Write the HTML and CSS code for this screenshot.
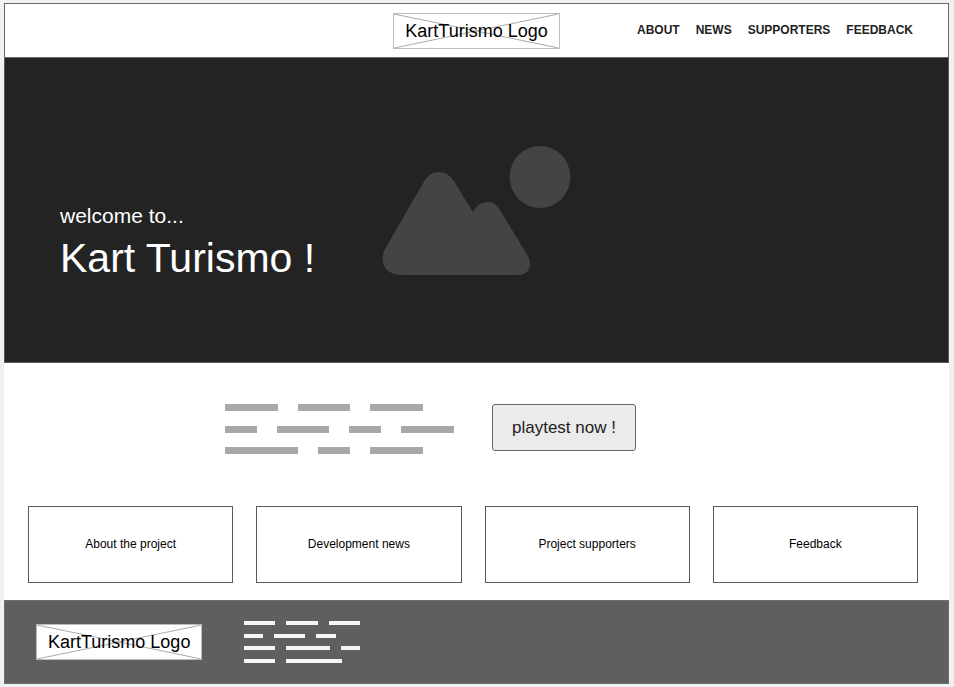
FILE: index.html
```html
<!DOCTYPE html>
<html lang="en">
<head>
<meta charset="utf-8">
<title>Kart Turismo</title>
<link rel="stylesheet" href="styles.css">
</head>
<body>
<div class="page">
  <header class="header">
    <a class="logo" href="#">
      <svg class="logo-cross" viewBox="0 0 166 36" preserveAspectRatio="none" aria-hidden="true"><path d="M0 0L166 36M166 0L0 36"/></svg>
      <span class="logo-text">KartTurismo Logo</span>
    </a>
    <nav class="nav">
      <a href="#about">ABOUT</a>
      <a href="#news">NEWS</a>
      <a href="#supporters">SUPPORTERS</a>
      <a href="#feedback">FEEDBACK</a>
    </nav>
  </header>
  <main>
    <section class="hero">
      <svg class="hero-picture" width="189" height="130" viewBox="36 44 567 390" aria-hidden="true">
        <ellipse cx="510" cy="140" rx="91" ry="93"/>
        <path d="M100 434C60 434 38 415 38 385C38 372 42 361 48 351L160 157C172 137 187 125 206 125C226 125 243 137 255 157L309 246C318 227 333 215 352 215C368 215 379 222 388 236L472 374C478 384 480 392 480 402C480 421 466 434 445 434Z"/>
      </svg>
      <div class="hero-text">
        <p class="welcome">welcome to...</p>
        <h1 class="title">Kart Turismo !</h1>
      </div>
    </section>
    <section class="intro">
      <svg class="intro-lines" width="229" height="50" viewBox="0 0 229 50" aria-hidden="true">
        <path d="M0 3.500H53M73 3.500H125M145 3.500H198M0 25.500H32M52 25.500H104M124 25.500H156M176 25.500H229M0 46.500H73M93 46.500H125M145 46.500H198"/>
      </svg>
      <button class="playtest" type="button">playtest now !</button>
    </section>
    <section class="cards">
      <a class="card" id="about" href="#about">About the project</a>
      <a class="card" id="news" href="#news">Development news</a>
      <a class="card" id="supporters" href="#supporters">Project supporters</a>
      <a class="card" id="feedback" href="#feedback">Feedback</a>
    </section>
  </main>
  <footer class="footer">
    <a class="logo" href="#">
      <svg class="logo-cross" viewBox="0 0 166 36" preserveAspectRatio="none" aria-hidden="true"><path d="M0 0L166 36M166 0L0 36"/></svg>
      <span class="logo-text">KartTurismo Logo</span>
    </a>
    <svg class="footer-lines" width="116" height="42" viewBox="0 0 116 42" aria-hidden="true">
      <path d="M0 2H31M42 2H74M85 2H116M0 15H19M30 15H61M72 15H92M0 27H31M42 27H86M97 27H116M0 40H31M42 40H98"/>
    </svg>
  </footer>
</div>
</body>
</html>
```

FILE: styles.css
```css
* {
  box-sizing: border-box;
}

body {
  margin: 0;
  padding: 3px 5px 3px 4px;
  background: #f0f1f2;
  color: #000;
  font-family: "Liberation Sans", Arial, sans-serif;
}

a {
  color: inherit;
  text-decoration: none;
}

.page {
  background: #fff;
}

.header {
  display: grid;
  grid-template-columns: 1fr auto 1fr;
  align-items: center;
  padding: 9px 0 8px;
  border: 1px solid #6a6a6c;
}

.logo {
  position: relative;
  display: block;
  padding: 0 11px;
  border: 1px solid #bdbdbd;
  background: #fff;
  font-size: 18px;
  line-height: 34px;
  white-space: nowrap;
}

.header .logo {
  grid-column: 2;
}

.logo-cross {
  position: absolute;
  inset: 0;
  width: 100%;
  height: 100%;
  fill: none;
  stroke: #a8a8a8;
}

.logo-text {
  position: relative;
}

.nav {
  display: flex;
  justify-content: flex-end;
  gap: 16px;
  padding: 0 35px 2px 0;
  color: #222;
  font-size: 12px;
  font-weight: 700;
  line-height: 16px;
}

.hero {
  display: grid;
  align-items: center;
  min-height: 305px;
  border: 1px solid #58585a;
  border-top: 0;
  background: #232323;
}

.hero-picture,
.hero-text {
  grid-area: 1 / 1;
}

.hero-picture {
  justify-self: center;
  fill: #444;
}

.hero-text {
  padding: 67px 0 0 55px;
  color: #fff;
}

.welcome,
.title {
  margin: 0;
  font-weight: 400;
}

.welcome {
  font-size: 21px;
  line-height: 28px;
}

.title {
  font-size: 41px;
  line-height: 56px;
}

.intro {
  display: flex;
  align-items: flex-start;
  gap: 38px;
  padding: 41px 0 0 221px;
}

.intro-lines {
  fill: none;
  stroke: #a8a8a8;
  stroke-width: 7px;
}

.playtest {
  padding: 0 19px;
  border: 1px solid #666;
  border-radius: 3px;
  background: #ebebeb;
  color: #222;
  font-family: inherit;
  font-size: 17px;
  line-height: 45px;
}

.cards {
  display: grid;
  grid-template-columns: repeat(4, 1fr);
  gap: 23px;
  padding: 52px 31px 17px 24px;
}

.card {
  border: 1px solid #5a5a5a;
  font-size: 12px;
  line-height: 75px;
  text-align: center;
}

.footer {
  display: flex;
  align-items: center;
  gap: 42px;
  padding: 20px 31px;
  border: 1px solid #6e6e6e;
  background: #5f5f5f;
}

.footer-lines {
  fill: none;
  stroke: #f5f5f5;
  stroke-width: 4px;
}
```
